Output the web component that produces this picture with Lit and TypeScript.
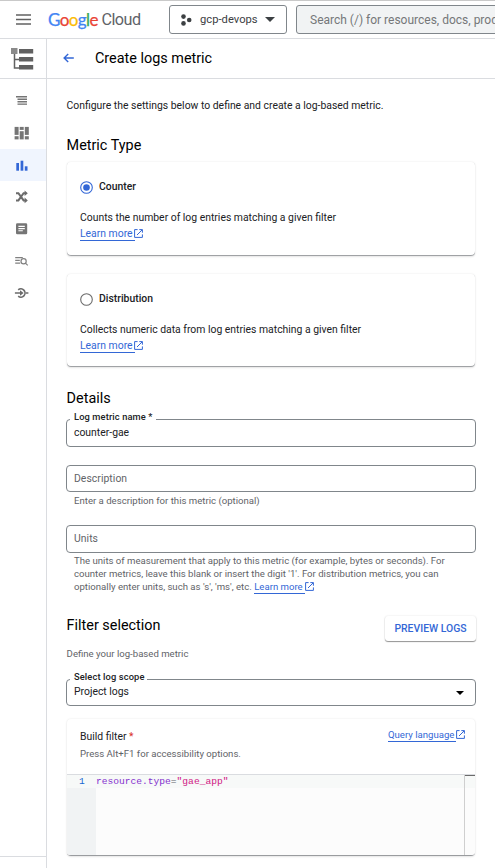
import { LitElement, html, css, svg, nothing } from "lit";
import { customElement, property } from "lit/decorators.js";
import { classMap } from "lit/directives/class-map.js";

const NAV_ICONS = [
  {
    id: "explorer",
    shape: svg`<g fill="#757575"><rect x="2" y="3" width="11" height="1.5"/><rect x="3.5" y="5.5" width="9.5" height="1.5"/><rect x="3.5" y="8" width="9.5" height="1.5"/><rect x="3.5" y="10.5" width="9.5" height="1.3"/></g>`,
  },
  {
    id: "dashboards",
    shape: svg`<g fill="#757575"><rect x=".6" y="1.9" width="4" height="8"/><rect x=".6" y="11.2" width="4" height="3.2"/><rect x="5.7" y="1.9" width="4" height="3"/><rect x="5.7" y="6.2" width="4" height="8.2"/><rect x="10.8" y="1.9" width="4" height="8"/><rect x="10.8" y="11.2" width="4" height="3.2"/></g>`,
  },
  {
    id: "metrics",
    shape: svg`<g fill="#3367d6"><rect x="2.3" y="6" width="2.7" height="7.7"/><rect x="6.6" y="3.7" width="2.7" height="10"/><rect x="10.8" y="9.3" width="2.7" height="4.4"/></g>`,
  },
  {
    id: "router",
    shape: svg`<g fill="none" stroke="#6b6b6b" stroke-width="2"><path d="M2 4.2h2.4l5.2 7.2h2.6M2 11.4h2.4l5.2-7.2h2.6"/></g><path fill="#6b6b6b" d="M10.6 1.4l3.2 2.8-3.2 2.8zM10.6 8.6l3.2 2.8-3.2 2.8z"/>`,
  },
  {
    id: "storage",
    shape: svg`<rect x="2" y="2.2" width="11.2" height="11" rx="1.3" fill="#757575"/><path d="M4.4 5.4h6.4M4.4 7.6h6.4M4.4 9.8h4.4" stroke="#fff" stroke-width="1.1"/>`,
  },
  {
    id: "analytics",
    shape: svg`<g fill="none" stroke="#808080" stroke-width="1.2"><path d="M1.2 4.6h7.6M1.2 7.4h4.6M1.2 10.2h5"/><circle cx="9.6" cy="8.3" r="2.6"/><path d="M11.4 10.1l2.4 2.3"/></g>`,
  },
  {
    id: "ingest",
    shape: svg`<g fill="none" stroke="#6b6b6b" stroke-width="1.6"><path d="M4.2 4.9A4.1 4.1 0 1 1 4.2 11.1"/><path d="M.9 8h6M11.6 8h2.8"/></g><path fill="#6b6b6b" d="M6 5.2L9.6 8 6 10.8z"/>`,
  },
];

@customElement("external-link")
export class ExternalLink extends LitElement {
  @property() label = "Learn more";
  static styles = css`
    :host { display: inline-flex; align-items: flex-start; color: #3367d6; }
    .text {
      height: var(--link-height, 13px); border-bottom: 1px solid #3367d6; line-height: var(--link-line, 14px);
      white-space: pre; padding-right: 2px;
    }
    svg { width: 9px; height: 9px; display: block; margin: var(--icon-top, 2px) 0 0 var(--icon-left, -0.4px); }
  `;
  render() {
    return html`<span class="text">${this.label}</span
      ><svg viewBox="0 0 9 9" fill="none" stroke="#3367d6">
        <path d="M3.6 .6H.6v7.8h7.8V5.4M5.3 .6h3.1v3.1M8.2.8L3 6" />
      </svg>`;
  }
}

@customElement("metric-card")
export class MetricCard extends LitElement {
  @property() name = "";
  @property() text = "";
  @property({ type: Boolean }) checked = false;
  static styles = css`
    :host {
      display: block; box-sizing: border-box; height: 94px; padding: 17px 13px 0;
      border-radius: 4px; background: #fff;
      box-shadow: 0 0 2px rgba(0, 0, 0, 0.1), inset 0 -1px 0 #a0a2a5, 0 1px 2px rgba(0, 0, 0, 0.08);
    }
    .option { display: flex; align-items: center; gap: 6px; height: 16px; }
    .radio { width: 13px; height: 13px; margin-top: 1px; }
    .name { font-weight: 500; font-size: 10.4px; margin-top: -1px; }
    p { margin: 15px 0 0; font-size: 10.4px; line-height: 16px; }
    external-link { margin-top: 1px; font-size: 10.4px; }
  `;
  render() {
    const tone = this.checked ? "#3367d6" : "#6b6b6b";
    return html`
      <div class="option">
        <svg class="radio" viewBox="0 0 13 13">
          <circle cx="6.5" cy="6.5" r="5.8" fill="none" stroke=${tone} stroke-width="1.1" />
          ${this.checked ? svg`<circle cx="6.5" cy="6.5" r="3.3" fill="#3367d6"/>` : nothing}
        </svg>
        <span class="name">${this.name}</span>
      </div>
      <p>${this.text}</p>
      <external-link></external-link>
    `;
  }
}

@customElement("outlined-field")
export class OutlinedField extends LitElement {
  @property() label = "";
  @property() value = "";
  @property({ type: Boolean }) select = false;
  static styles = css`
    :host { display: block; position: relative; box-sizing: border-box; height: 27px; border: 1px solid #80868b; border-radius: 4px; }
    .row { display: flex; align-items: center; justify-content: space-between; box-sizing: border-box; height: 25px; padding: 0 11px 0 7px; font-size: 10.4px; }
    .filled { padding-bottom: 1px; }
    .choice { padding-bottom: 3px; }
    .empty { color: #5f6368; letter-spacing: 0.05px; }
    .legend {
      position: absolute; left: 3px; top: -10px; padding: 0 3px 0 4px; background: #fff;
      font-size: 9.3px; line-height: 13px; font-weight: 500; letter-spacing: 0.12px; color: #202124;
    }
    .caret { width: 8px; height: 4px; margin-top: 3px; }
  `;
  render() {
    return html`
      ${this.value ? html`<span class="legend">${this.label}</span>` : nothing}
      <div class=${classMap({ row: true, filled: !!this.value, choice: this.select })}>
        <span class=${classMap({ empty: !this.value })}>${this.value || this.label}</span>
        ${this.select ? html`<svg class="caret" viewBox="0 0 8 4"><path d="M0 0h8L4 4z" /></svg>` : nothing}
      </div>
    `;
  }
}

@customElement("app-root")
export class AppRoot extends LitElement {
  static styles = css`
    :host {
      display: flex; flex-direction: column; box-sizing: border-box; width: 495px; height: 868px; overflow: hidden;
      border-top: 1px solid #c9c9c9; background: #fff; color: #202124;
      font-family: Roboto, "Liberation Sans", sans-serif; font-size: 10.4px;
    }
    * { box-sizing: border-box; }
    header { display: flex; align-items: center; flex: none; height: 38px; border-bottom: 1px solid #dadce0; padding-left: 16px; }
    .menu { width: 15px; height: 11px; flex: none; }
    .logo { display: flex; width: 121px; margin-left: 17px; flex: none; line-height: 20px; white-space: nowrap; }
    .brand { width: 53.5px; font-family: Lato, sans-serif; font-size: 17px; letter-spacing: -0.6px; -webkit-text-stroke: 0.25px currentColor; }
    .product { font-family: Roboto, sans-serif; font-size: 16.2px; color: #5f6368; letter-spacing: -0.55px; }
    .blue { color: #4285f4; }
    .red { color: #ea4335; }
    .yellow { color: #fbbc05; }
    .green { color: #34a853; }
    .project {
      display: flex; align-items: center; flex: none; width: 118px; height: 29px; border: 1px solid #80868b;
      border-radius: 3px; padding: 0 11px 0 10px; font-size: 11.2px; color: #3c4043; letter-spacing: 0.02px;
    }
    .dots { width: 12px; height: 12px; margin-right: 8px; }
    .arrow { width: 10px; height: 5px; margin-left: auto; }
    .search {
      flex: none; width: 220px; height: 29px; margin-left: 9px; padding-left: 13px; border: 1px solid #80868b;
      border-radius: 3px; background: #f1f3f4; color: #757779; font-size: 12px; line-height: 28px; white-space: nowrap;
    }
    .body { display: flex; flex: 1; min-height: 0; }
    nav { display: flex; flex-direction: column; flex: none; width: 47px; border-right: 1px solid #dadce0; }
    .product-icon { display: flex; justify-content: center; height: 40px; flex: none; border-bottom: 1px solid #dadce0; padding: 8px 3px 0 0; }
    .product-icon svg { width: 24px; height: 24px; }
    .items { flex: 1; padding-top: 6px; }
    .item { display: flex; align-items: center; justify-content: center; height: 32px; padding: 0 3px 2px 0; }
    .item svg { width: 15px; height: 15px; }
    .selected { background: #f0f5fe; }
    .foot { height: 12px; border-top: 1px solid #dadce0; }
    main { flex: 1; min-width: 0; }
    .title { display: flex; align-items: center; height: 40px; border-bottom: 1px solid #dadce0; padding: 0 0 0 16px; }
    .title svg { width: 11px; height: 10px; margin: 0 21px 1px 0; }
    .title h1 { margin: 0; font-size: 14.4px; line-height: 19px; font-weight: 400; color: #000; }
    .content { display: flex; flex-direction: column; width: 429px; padding: 19px 0 0 19px; }
    .content > .intro, .content > .define, .content > h2 { padding-left: 0.6px; }
    .intro { line-height: 16px; }
    h2 { margin: 0; font-weight: 400; font-size: 14.4px; line-height: 20px; color: #000; }
    .type-title { margin-top: 22px; margin-bottom: 6px; }
    metric-card { margin: 0 1px; }
    .second { margin-top: 18px; height: 93px; }
    .details-title { margin-top: 22px; }
    .name-field { margin-top: 10px; height: 28px; }
    .description { margin-top: 18px; }
    .units { margin-top: 18px; height: 28px; }
    .hint { font-size: 9.6px; line-height: 13px; color: #5f6368; padding-left: 8px; white-space: nowrap; }
    .hint-top { margin-top: 2px; }
    .units-hint { margin-top: 1px; }
    .units-hint external-link { --link-line: 11px; --link-height: 12px; --icon-top: 1px; --icon-left: 0px; vertical-align: top; margin-top: 1px; }
    .filter-row { display: flex; justify-content: space-between; margin-top: 22px; height: 25px; }
    .filter-row h2 { line-height: 20px; padding-left: 0.6px; }
    .preview {
      width: 91px; height: 25px; border-radius: 3px; text-align: center; font-size: 10.4px; font-weight: 500; line-height: 26px;
      color: #3367d6; box-shadow: 0 0 2px rgba(0, 0, 0, 0.12), 0 1px 1px rgba(0, 0, 0, 0.4);
    }
    .define { margin-top: 6px; line-height: 14px; }
    .scope { margin-top: 18px; }
    .builder {
      margin: 13px 1px 0 1px; height: 137px; border-radius: 4px; overflow: hidden;
      box-shadow: 0 0 2px rgba(0, 0, 0, 0.1), 0 1px 2px rgba(0, 0, 0, 0.08);
      border-bottom: 1px solid #9a9c9f;
    }
    .builder-head { display: flex; justify-content: space-between; height: 55px; padding: 10px 10px 0 13px; }
    .builder-head external-link { font-size: 9.6px; --link-line: 12px; --link-height: 12px; --icon-top: 1px; }
    .build { line-height: 16px; }
    .required { color: #d93025; }
    .builder-head .assist { padding: 0; margin-top: 2px; }
    .editor { display: flex; height: 81px; border-top: 1px solid #dadce0; background: #fcfcfc; font-family: "Liberation Mono", monospace; font-size: 9.6px; line-height: 13px; }
    .gutter { width: 29px; background: #f1f3f4; color: #1967d2; }
    .number { height: 13px; background: #f7f9f8; padding-left: 12px; }
    .code { flex: 1; }
    .line { height: 13px; background: #f7f9f8; color: #8430ce; white-space: pre; }
    .op { color: #5f6368; }
    .str { color: #d01884; }
    .ruler { width: 11px; border-left: 1px solid #cfcfcf; }
    .ruler-line { height: 13px; border-top: 1px solid #6b6b6b; background: #f7f9f8; }
  `;

  render() {
    return html`
      <header>
        <svg class="menu" viewBox="0 0 15 11" stroke="#616161" stroke-width="1.3"><path d="M0 1h15M0 5.5h15M0 10h15" /></svg>
        <div class="logo">
          <span class="brand"><span class="blue">G</span><span class="red">o</span><span class="yellow">o</span><span class="blue">g</span><span class="green">l</span><span class="red">e</span></span>
          <span class="product">Cloud</span>
        </div>
        <div class="project">
          <svg class="dots" viewBox="0 0 12 12" fill="#3c4043"><circle cx="3.5" cy="2.6" r="2.3" /><circle cx="9.2" cy="6" r="2.3" /><circle cx="3.5" cy="9.4" r="2.3" /></svg>
          <span>gcp-devops</span>
          <svg class="arrow" viewBox="0 0 10 5"><path fill="#3c4043" d="M0 0h10L5 5z" /></svg>
        </div>
        <div class="search">Search (/) for resources, docs, products, and more</div>
      </header>
      <div class="body">
        <nav>
          <div class="product-icon">
            <svg viewBox="0 0 24 24">
              <path d="M4.5 6v15H9M4.5 12.5H9" fill="none" stroke="#616161" stroke-width="1.5" />
              <path fill="#8a8a8a" d="M1 1h6.5v6H1z" />
              <path fill="#616161" d="M9 2h14.2v4.5H9zM9 10h14.2v4.6H9zM9 18h14.2v4.6H9z" />
            </svg>
          </div>
          <div class="items">
            ${NAV_ICONS.map(
              (icon) => html`<div class=${classMap({ item: true, selected: icon.id === "metrics" })}>
                <svg viewBox="0 0 15 15">${icon.shape}</svg>
              </div>`
            )}
          </div>
          <div class="foot"></div>
        </nav>
        <main>
          <div class="title">
            <svg viewBox="0 0 11 10" fill="none" stroke="#3367d6" stroke-width="1.4"><path d="M10.8 5H1.2M5.2 .9L1.1 5l4.1 4.1" /></svg>
            <h1>Create logs metric</h1>
          </div>
          <div class="content">
            <div class="intro">Configure the settings below to define and create a log-based metric.</div>
            <h2 class="type-title">Metric Type</h2>
            <metric-card name="Counter" text="Counts the number of log entries matching a given filter" checked></metric-card>
            <metric-card class="second" name="Distribution" text="Collects numeric data from log entries matching a given filter"></metric-card>
            <h2 class="details-title">Details</h2>
            <outlined-field class="name-field" label="Log metric name *" value="counter-gae"></outlined-field>
            <outlined-field class="description" label="Description"></outlined-field>
            <div class="hint hint-top">Enter a description for this metric (optional)</div>
            <outlined-field class="units" label="Units"></outlined-field>
            <div class="hint units-hint">
              The units of measurement that apply to this metric (for example, bytes or seconds). For<br />
              counter metrics, leave this blank or insert the digit '1'. For distribution metrics, you can<br />
              optionally enter units, such as 's', 'ms', etc. <external-link></external-link>
            </div>
            <div class="filter-row">
              <h2>Filter selection</h2>
              <div class="preview">PREVIEW LOGS</div>
            </div>
            <div class="hint define">Define your log-based metric</div>
            <outlined-field class="scope" label="Select log scope" value="Project logs" select></outlined-field>
            <section class="builder">
              <div class="builder-head">
                <div>
                  <div class="build">Build filter <span class="required">*</span></div>
                  <div class="hint assist">Press Alt+F1 for accessibility options.</div>
                </div>
                <external-link label="Query language"></external-link>
              </div>
              <div class="editor">
                <div class="gutter"><div class="number">1</div></div>
                <div class="code"><div class="line">resource.type<span class="op">=</span><span class="str">"gae_app"</span></div></div>
                <div class="ruler"><div class="ruler-line"></div></div>
              </div>
            </section>
          </div>
        </main>
      </div>
    `;
  }
}
